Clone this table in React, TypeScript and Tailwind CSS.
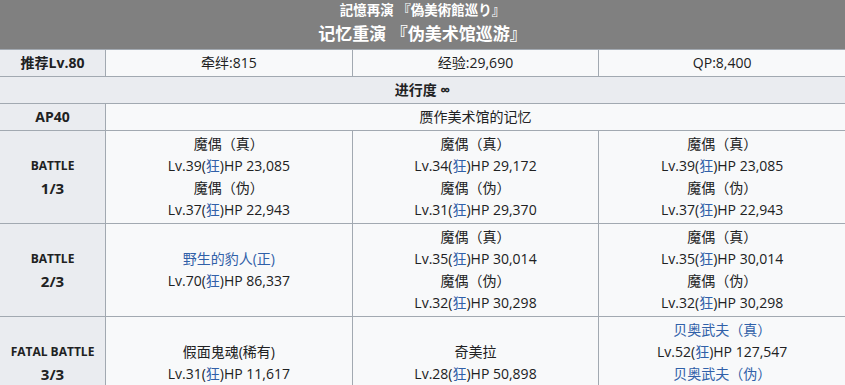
import React from 'react';

type Line = { text: React.ReactNode; blue?: boolean };

const font = { fontFamily: '"Open Sans", "Noto Sans CJK SC", sans-serif' };

const Mad = () => <span className="text-[#3060a8]">狂</span>;

const lv = (lvl: number, hp: string) => (
  <>
    Lv.{lvl}(<Mad />)HP {hp}
  </>
);

const battles: { label: string; round: string; cols: Line[][] }[] = [
  {
    label: 'BATTLE',
    round: '1/3',
    cols: [
      [{ text: '魔偶（真）' }, { text: lv(39, '23,085') }, { text: '魔偶（伪）' }, { text: lv(37, '22,943') }],
      [{ text: '魔偶（真）' }, { text: lv(34, '29,172') }, { text: '魔偶（伪）' }, { text: lv(31, '29,370') }],
      [{ text: '魔偶（真）' }, { text: lv(39, '23,085') }, { text: '魔偶（伪）' }, { text: lv(37, '22,943') }],
    ],
  },
  {
    label: 'BATTLE',
    round: '2/3',
    cols: [
      [{ text: '野生的豹人(正)', blue: true }, { text: lv(70, '86,337') }],
      [{ text: '魔偶（真）' }, { text: lv(35, '30,014') }, { text: '魔偶（伪）' }, { text: lv(32, '30,298') }],
      [{ text: '魔偶（真）' }, { text: lv(35, '30,014') }, { text: '魔偶（伪）' }, { text: lv(32, '30,298') }],
    ],
  },
  {
    label: 'FATAL BATTLE',
    round: '3/3',
    cols: [
      [{ text: '假面鬼魂(稀有)' }, { text: lv(31, '11,617') }],
      [{ text: '奇美拉' }, { text: lv(28, '50,898') }],
      [
        { text: '贝奥武夫（真）', blue: true },
        { text: lv(52, '127,547') },
        { text: '贝奥武夫（伪）', blue: true },
        { text: lv(50, '127,547') },
      ],
    ],
  },
];

const th = 'border border-[#a2a9b1] bg-[#eaecf0] font-bold text-center py-[2px] px-2';
const td = 'border border-[#a2a9b1] bg-[#f8f9fa] text-center py-[2px] px-2';

export default function App() {
  return (
    <div className="w-[845px] h-[385px] overflow-hidden bg-white text-[#202122]" style={font}>
      <table className="-ml-px w-[847px] border-collapse table-fixed text-[14px] leading-[22px]">
        <colgroup>
          <col className="w-[106px]" />
          <col />
          <col />
          <col />
        </colgroup>
        <tbody>
          <tr>
            <th colSpan={4} className="bg-[#808080] text-white font-bold text-center pt-0 pb-[3px]">
              <div className="text-[13.5px] leading-[21px]">記憶再演 『偽美術館巡り』</div>
              <div className="text-[17px] leading-[25px]">记忆重演 『伪美术馆巡游』</div>
            </th>
          </tr>
          <tr>
            <th className={th}>推荐Lv.80</th>
            <td className={td}>牵绊:815</td>
            <td className={td}>经验:29,690</td>
            <td className={td}>QP:8,400</td>
          </tr>
          <tr>
            <th colSpan={4} className={th}>进行度 ∞</th>
          </tr>
          <tr>
            <th className={th}>AP40</th>
            <td colSpan={3} className={td}>赝作美术馆的记忆</td>
          </tr>
          {battles.map((b, i) => (
            <tr key={i}>
              <th className={th}>
                <div className="text-[12px] leading-[22px]">{b.label}</div>
                <div className="text-[15px] leading-[22px]">{b.round}</div>
              </th>
              {b.cols.map((c, j) => (
                <td key={j} className={td}>
                  {c.map((l, k) => (
                    <div key={k} className={l.blue ? 'text-[#3060a8]' : ''}>
                      {l.text}
                    </div>
                  ))}
                </td>
              ))}
            </tr>
          ))}
        </tbody>
      </table>
    </div>
  );
}
